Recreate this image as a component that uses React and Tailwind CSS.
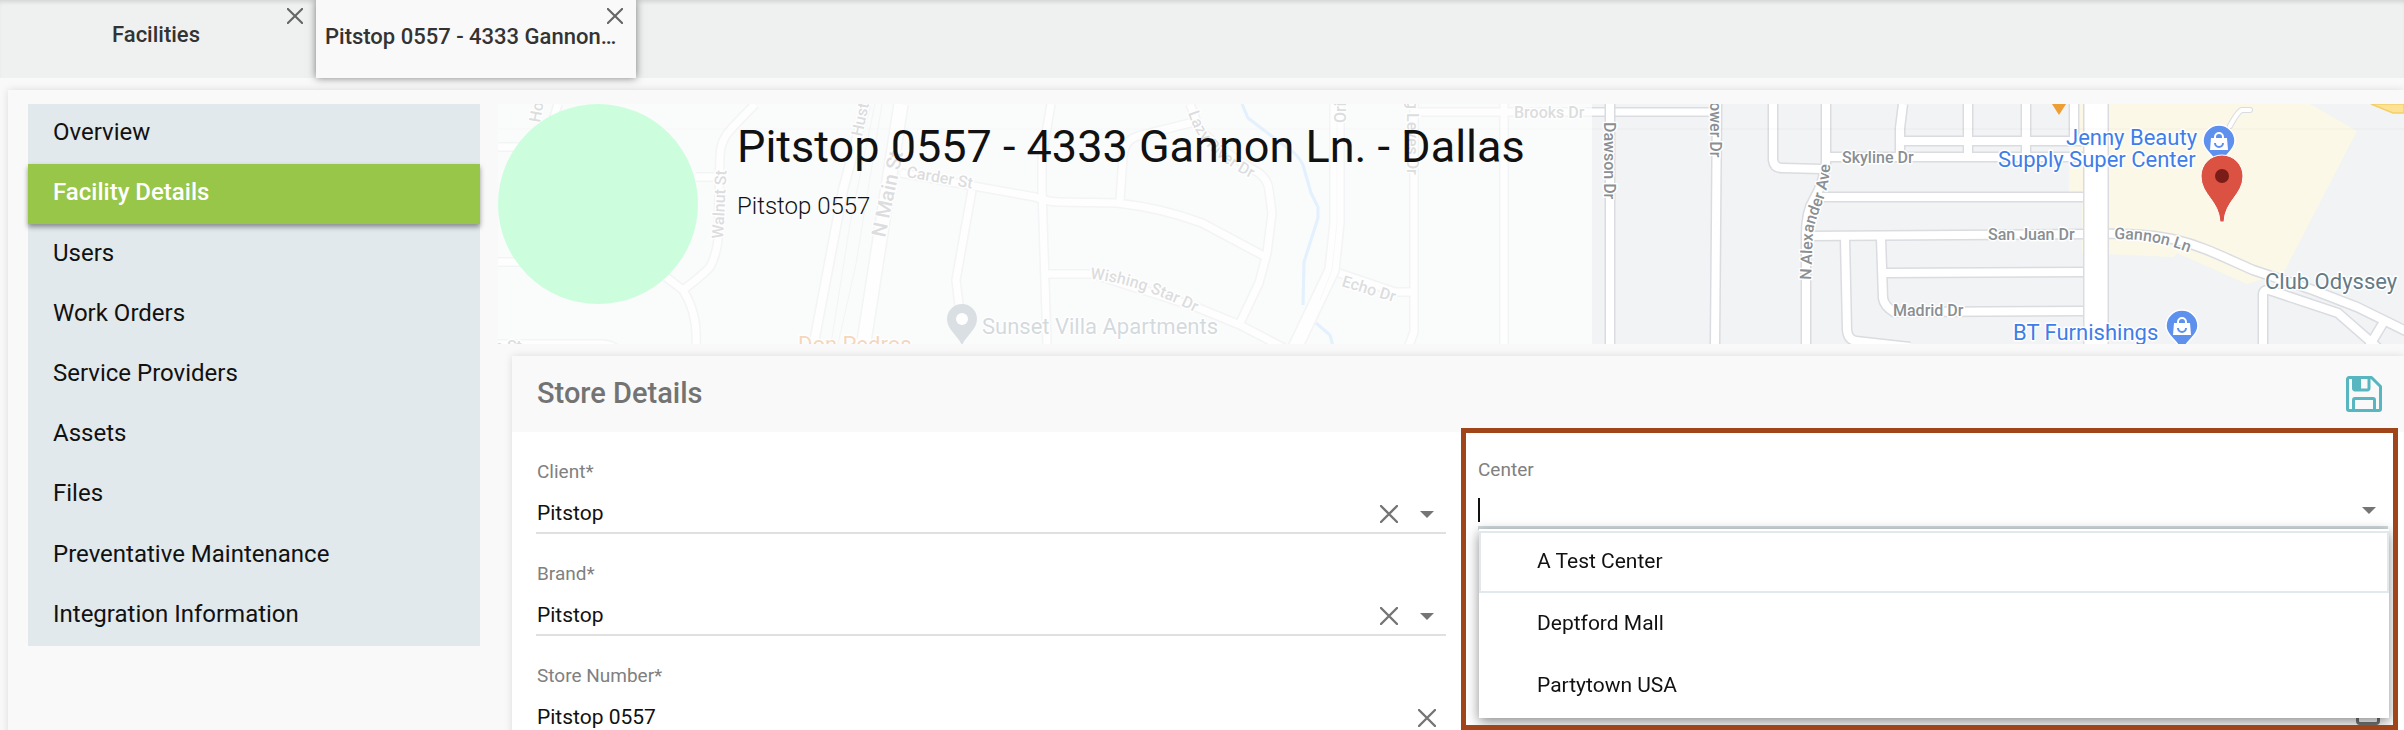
import { useEffect, useRef, useState } from 'react';

const NAV_ITEMS = [
  'Overview',
  'Facility Details',
  'Users',
  'Work Orders',
  'Service Providers',
  'Assets',
  'Files',
  'Preventative Maintenance',
  'Integration Information',
];

const CENTERS = ['A Test Center', 'Deptford Mall', 'Partytown USA'];

const WEST_ROADS = [
  'M0 43H60',
  'M0 158H60',
  'M60 0L54 20',
  'M198 73H221',
  'M257 0L234 24Q222 36 222 52L220 136Q218 152 212 163Q206 170 185 186L168 173',
  'M185 186Q200 210 198 240',
  'M0 240H100Q114 239 122 248',
  'M403 69L537 93Q550 98 562 98L619 99Q664 104 704 119L766 152',
  'M474 86L458 176L461 201',
  'M553 0L544 53V86L549 240',
  'M548 170H594L698 203L742 221L786 244',
  'M622 96L625 53Q626 36 640 32L696 18',
  'M692 0L702 26Q730 52 761 69Q770 76 771 86L774 109L769 149L761 179L742 219',
  'M841 169L897 188H916',
  'M916 0V228L910 244',
  'M916 8H1215',
  'M1006 0V240',
];

const EAST_ROADS = [
  'M1112 0V240',
  'M1219 0L1217 240',
  'M1275 0V56Q1276 64 1284 64L1324 65',
  'M1328 0V58Q1326 78 1316 95Q1308 108 1308 130V240',
  'M1405 0L1402 24V50',
  'M1403 37H1590',
  'M1470 0V52',
  'M1528 0V52',
  'M1328 53H1590',
  'M1322 93H1590',
  'M1308 132L1590 130',
  'M1347 134L1349 226Q1350 236 1358 237L1412 243',
  'M1383 134L1385 194Q1386 202 1396 208L1590 207',
  'M1386 169L1590 168',
  'M1576 0V34',
  'M1600 130C1680 128 1700 142 1755 166L1815 186L1859 203L1910 228',
  'M1765 244V190Q1766 184 1774 187L1840 209L1880 244',
  'M1887 216L1870 244',
];

function Roads({ paths, width }) {
  return (
    <>
      {paths.map((d) => (
        <path key={d} d={d} fill="none" stroke="#dadce0" strokeWidth={width + 3} />
      ))}
      {paths.map((d) => (
        <path key={`${d}-fill`} d={d} fill="none" stroke="#fff" strokeWidth={width} />
      ))}
    </>
  );
}

function ShopPin({ x, y }) {
  return (
    <g transform={`translate(${x} ${y})`}>
      <path
        d="M0 -16a16 16 0 0 1 16 16c0 9-9 13-12 19q-4 6-8 0c-3-6-12-10-12-19a16 16 0 0 1 16-16z"
        fill="#5e90ee"
        stroke="#fff"
        strokeWidth="1.5"
      />
      <path d="M-8 -3h16l1 12h-18z" fill="#fff" />
      <path d="M-4 -2v-2a4 4 0 0 1 8 0v2" fill="none" stroke="#fff" strokeWidth="2" />
      <path d="M-4 2a4 4 0 0 0 8 0" fill="none" stroke="#5e90ee" strokeWidth="2" />
    </g>
  );
}

function FacilityMap() {
  return (
    <svg
      className="absolute inset-0 h-full w-full bg-[#f1f3f4] font-[Roboto]"
      viewBox="0 0 1906 240"
      preserveAspectRatio="xMinYMin slice"
      role="img"
      aria-label="Map of the facility"
    >
      <defs>
        <path id="lazy-river" d="M690 9C700 40 722 60 764 80" />
        <path id="wishing-star" d="M592 175C630 178 670 194 704 212" />
        <path id="alexander" d="M1313 176L1315 128C1318 108 1332 90 1332 60" />
        <path id="gannon" d="M1616 135C1650 135 1670 140 1700 152" />
      </defs>

      <path d="M1571 0H1812L1859 27L1786 168L1749 180L1679 149L1676 153L1584 149V88H1571z" fill="#fcf8e8" />
      <path d="M1873 0L1895 9H1906V0z" fill="#fde293" stroke="#f3cf6a" strokeWidth="1.5" />

      <path d="M744 0L750 14L788 43Q800 50 805 61L813 89L820 103V114L806 158L805 201" fill="none" stroke="#a5cffb" strokeWidth="3" />
      <path d="M818 219L832 231L835 242" fill="none" stroke="#a5cffb" strokeWidth="3" />
      <Roads paths={WEST_ROADS} width={7} />
      <Roads paths={['M368 0L345 86L315 244']} width={8} />
      <Roads paths={['M403 0L365 244', 'M839 0V119L834 166L795 248']} width={13} />
      <path d="M839 0V119L834 166L822 196" fill="none" stroke="#e6e8ea" strokeWidth="1" />
      <path d="M377 0L352 120L333 240M384 0L358 160L340 240" fill="none" stroke="#dadce0" strokeWidth="1" />

      <Roads paths={EAST_ROADS} width={8} />
      <Roads paths={['M1598 -4V244']} width={23} />
      <path d="M1732 22Q1740 7 1744 6H1752" fill="none" stroke="#dadce0" strokeWidth="6" strokeLinecap="round" />
      <path d="M1732 22Q1740 7 1744 6H1752" fill="none" stroke="#fff" strokeWidth="4" strokeLinecap="round" />
      <path d="M0 25H1906" stroke="#000" strokeOpacity="0.03" />

      <g
        fontSize="16"
        fontWeight="500"
        fill="#8a8f93"
        stroke="#fff"
        strokeWidth="3"
        strokeLinejoin="round"
        className="[paint-order:stroke]"
      >
        <text transform="translate(42 19) rotate(-80)">Ho</text>
        <text transform="translate(225 135) rotate(-87)">Walnut St</text>
        <text transform="translate(364 33) rotate(-78)">Hust</text>
        <text transform="translate(387 134) rotate(-78)" fontSize="20">N Main St</text>
        <text transform="translate(408 73) rotate(10)">Carder St</text>
        <text><textPath href="#wishing-star">Wishing Star Dr</textPath></text>
        <text><textPath href="#lazy-river">Lazy River Dr</textPath></text>
        <text transform="translate(848 19) rotate(-90)">Ori</text>
        <text transform="translate(909 -4) rotate(90)">g Leyes Dr</text>
        <text transform="translate(843 182) rotate(17)">Echo Dr</text>
        <text x="1016" y="14">Brooks Dr</text>
        <text x="-4" y="248">n St</text>
        <text transform="translate(1106 18) rotate(90)">Dawson Dr</text>
        <text transform="translate(1212 -12) rotate(90)">Power Dr</text>
        <text x="1344" y="59">Skyline Dr</text>
        <text><textPath href="#alexander">N Alexander Ave</textPath></text>
        <text x="1490" y="136">San Juan Dr</text>
        <text><textPath href="#gannon">Gannon Ln</textPath></text>
        <text x="1395" y="212">Madrid Dr</text>
      </g>
      <g fontSize="22" stroke="#fff" strokeWidth="3" strokeLinejoin="round" className="[paint-order:stroke]">
        <text x="484" y="230" fill="#6f8691">Sunset Villa Apartments</text>
        <text x="300" y="248" fill="#dd7a1f">Don Pedros</text>
        <text x="1568" y="41" fill="#3f7de8">Jenny Beauty</text>
        <text x="1500" y="63" fill="#3f7de8">Supply Super Center</text>
        <text x="1515" y="236" fill="#3f7de8">BT Furnishings</text>
        <text x="1767" y="185" fill="#647b86">Club Odyssey</text>
      </g>

      <path d="M464 200a15 15 0 0 1 15 15c0 10-10 16-15 26c-5-10-15-16-15-26a15 15 0 0 1 15-15z" fill="#8496a1" />
      <circle cx="464" cy="215" r="6" fill="#fff" />
      <path d="M1554 0h14l-7 11z" fill="#ee9f34" />
      <ShopPin x={1721} y={37} />
      <ShopPin x={1684} y={222} />
      <path
        d="M1724 51a21 21 0 0 1 21 21c0 19-18 24-19 46h-4c-1-22-19-27-19-46a21 21 0 0 1 21-21z"
        fill="#db5142"
        stroke="#fff"
        strokeWidth="1"
      />
      <circle cx="1724" cy="72" r="7" fill="#7a1c17" />
    </svg>
  );
}

function CloseIcon({ className }) {
  return (
    <svg className={className} viewBox="0 0 18 18" fill="none" stroke="currentColor" strokeWidth="2.4" strokeLinecap="round" aria-hidden="true">
      <path d="M1 1L17 17M17 1L1 17" />
    </svg>
  );
}

function SaveIcon() {
  return (
    <svg className="h-9 w-9" viewBox="0 0 36 36" fill="none" stroke="currentColor" strokeWidth="3" strokeLinejoin="round" aria-hidden="true">
      <path d="M3 1.500H25.500L34.500 10.500V33A1.500 1.500 0 0 1 33 34.500H3A1.500 1.500 0 0 1 1.500 33V3A1.500 1.500 0 0 1 3 1.500z" />
      <path d="M7.500 2V12.500A1.500 1.500 0 0 0 9 14H21.500A1.500 1.500 0 0 0 23 12.500V2" />
      <path d="M7.500 34V24A1.500 1.500 0 0 1 9 22.500H27A1.500 1.500 0 0 1 28.500 24V34" />
      <path d="M8 2H15V13.500H8z" fill="currentColor" stroke="none" />
    </svg>
  );
}

function ArrowIcon() {
  return (
    <svg className="h-[7px] w-[14px]" viewBox="0 0 14 7" fill="currentColor" aria-hidden="true">
      <path d="M0 0H14L7 7z" />
    </svg>
  );
}

function Field({ id, label, initialValue, hasMenu }) {
  const [value, setValue] = useState(initialValue);

  return (
    <div className="h-[102px] pt-7">
      <label htmlFor={id} className="block pl-px text-[19px] leading-6 text-[#808080]">
        {label}
      </label>
      <div className="mt-3 flex h-[38px] items-center border-b-2 border-[#e0e0e0] pl-px">
        <input
          id={id}
          value={value}
          onChange={(e) => setValue(e.target.value)}
          className="min-w-0 flex-1 bg-transparent text-[21px] text-[#111] outline-none"
        />
        <button type="button" aria-label={`Clear ${label}`} onClick={() => setValue('')} className="flex w-[38px] justify-center text-[#757575]">
          <CloseIcon className="h-[18px] w-[18px]" />
        </button>
        {hasMenu && (
          <button type="button" aria-label={`Open ${label}`} className="flex w-[38px] justify-center text-[#757575]">
            <ArrowIcon />
          </button>
        )}
      </div>
    </div>
  );
}

function CenterField() {
  const [query, setQuery] = useState('');
  const inputRef = useRef(null);

  useEffect(() => {
    inputRef.current?.focus();
  }, []);

  return (
    <div className="relative -mt-1 h-[302px] flex-1 overflow-hidden border-[5px] border-[#a0441a] bg-white pt-[25px] pr-[5px] pl-3">
      <label htmlFor="center" className="block text-[19px] leading-6 text-[#808080]">
        Center
      </label>
      <div className="mt-3 flex h-9 items-center border-b-4 border-[#cfd8dc]">
        <span className="h-6 w-[2px] bg-[#111]" />
        <input
          id="center"
          ref={inputRef}
          value={query}
          onChange={(e) => setQuery(e.target.value)}
          className="min-w-0 flex-1 bg-transparent text-[21px] text-[#111] caret-transparent outline-none"
        />
        <button type="button" aria-label="Open Center" className="flex w-[38px] justify-center text-[#757575]">
          <ArrowIcon />
        </button>
      </div>
      <ul className="absolute top-24 right-1 left-[13px] z-10 bg-white pt-[2px] pb-px shadow-[0_4px_12px_rgba(0,0,0,0.45)]">
        {CENTERS.map((name, i) => (
          <li key={name} className={i === 0 ? 'border-2 border-[#e1e9ec]' : 'border-2 border-transparent'}>
            <button type="button" onClick={() => setQuery(name)} className="block h-[58px] w-full pl-14 text-left text-[21px] text-[#111]">
              {name}
            </button>
          </li>
        ))}
      </ul>
      <div className="mt-[171px] flex justify-end pr-2">
        <input type="checkbox" aria-label="Center option" className="h-6 w-6 appearance-none rounded-sm border-[3px] border-[#757575]" />
      </div>
    </div>
  );
}

export default function App() {
  const [active, setActive] = useState('Facility Details');

  return (
    <div className="flex h-screen flex-col overflow-hidden bg-[#f9f9f9] font-[Roboto,sans-serif] text-[#111]">
      <header className="flex h-[78px] shrink-0 bg-[#eff1f1] text-[22px] font-medium text-[#333] shadow-[inset_0_4px_4px_-2px_rgba(0,0,0,0.12)]">
        <div className="relative flex w-[316px] items-center justify-center pr-1 pb-[10px]">
          <a href="#facilities">Facilities</a>
          <button type="button" aria-label="Close Facilities" className="absolute top-2 right-[13px] text-[#666]">
            <CloseIcon className="h-4 w-4" />
          </button>
        </div>
        <div className="relative flex w-80 items-center bg-[#f9f9f9] px-[9px] pb-[6px] shadow-[0_0_8px_rgba(0,0,0,0.5)]">
          <a href="#pitstop" className="whitespace-nowrap">Pitstop 0557 - 4333 Gannon…</a>
          <button type="button" aria-label="Close Pitstop 0557" className="absolute top-2 right-[13px] text-[#666]">
            <CloseIcon className="h-4 w-4" />
          </button>
        </div>
      </header>

      <div className="mt-3 ml-2 flex flex-1 items-start pt-[14px] pl-5 shadow-[0_0_8px_rgba(0,0,0,0.12)]">
        <nav className="grid h-[542px] w-[452px] shrink-0 grid-rows-9 bg-[#e1e9ec] text-2xl">
          {NAV_ITEMS.map((item) => (
            <a
              key={item}
              href="#section"
              onClick={() => setActive(item)}
              className={
                item === active
                  ? 'flex items-center bg-[#97c648] px-[25px] pb-1 font-medium text-white shadow-[0_3px_5px_rgba(0,0,0,0.4)]'
                  : 'flex items-center px-[25px] pb-1'
              }
            >
              {item}
            </a>
          ))}
        </nav>

        <main className="ml-[18px] min-w-0 flex-1">
          <section className="relative h-60 overflow-hidden">
            <FacilityMap />
            <div className="relative flex h-full w-[1094px] bg-[#fdfdfd]/70">
              <div className="h-[200px] w-[200px] shrink-0 rounded-full bg-[#ccfedd]" />
              <div className="pt-4 pl-[39px]">
                <h1 className="text-[45px] leading-[54px] whitespace-nowrap">Pitstop 0557 - 4333 Gannon Ln. - Dallas</h1>
                <p className="mt-4 text-2xl font-light">Pitstop 0557</p>
              </div>
            </div>
          </section>

          <section className="mt-3 ml-[14px] bg-white shadow-[0_0_8px_rgba(0,0,0,0.12)]">
            <div className="flex h-[76px] items-center justify-between bg-[#f9f9f9] pr-[22px] pl-[25px]">
              <h2 className="text-[29px] font-medium text-[#737373]">Store Details</h2>
              <button type="button" aria-label="Save" className="text-[#58b6c0]">
                <SaveIcon />
              </button>
            </div>
            <div className="flex pr-[6px] pl-6">
              <div className="mr-[15px] w-[910px] shrink">
                <Field id="client" label="Client*" initialValue="Pitstop" hasMenu />
                <Field id="brand" label="Brand*" initialValue="Pitstop" hasMenu />
                <Field id="store-number" label="Store Number*" initialValue="Pitstop 0557" />
              </div>
              <CenterField />
            </div>
          </section>
        </main>
      </div>
    </div>
  );
}
